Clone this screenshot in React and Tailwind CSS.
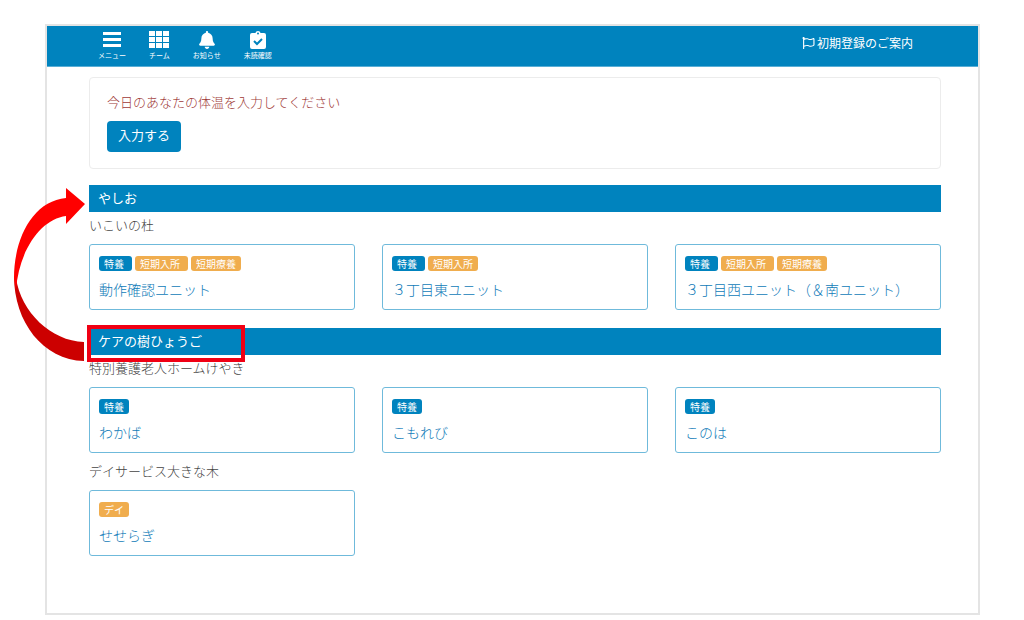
import clsx from 'clsx'
import { FaBell, FaRegFlag } from 'react-icons/fa'

const navItems = [
  { label: 'メニュー', icon: MenuIcon },
  { label: 'チーム', icon: GridIcon },
  { label: 'お知らせ', icon: FaBell },
  { label: '未読確認', icon: ClipboardIcon },
]

const corporations = [
  {
    name: 'やしお',
    facilities: [
      {
        name: 'いこいの杜',
        units: [
          { name: '動作確認ユニット', tags: ['特養', '短期入所', '短期療養'] },
          { name: '３丁目東ユニット', tags: ['特養', '短期入所'] },
          { name: '３丁目西ユニット（＆南ユニット）', tags: ['特養', '短期入所', '短期療養'] },
        ],
      },
    ],
  },
  {
    name: 'ケアの樹ひょうご',
    highlighted: true,
    facilities: [
      {
        name: '特別養護老人ホームけやき',
        units: [
          { name: 'わかば', tags: ['特養'] },
          { name: 'こもれび', tags: ['特養'] },
          { name: 'このは', tags: ['特養'] },
        ],
      },
      {
        name: 'デイサービス大きな木',
        units: [{ name: 'せせらぎ', tags: ['デイ'] }],
      },
    ],
  },
]

export default function App() {
  return (
    <div className="min-h-screen bg-white pt-6 pr-11 pb-1 pl-[45px] font-['Noto_Sans_CJK_JP',sans-serif] text-[13px] leading-5 text-[#444]">
      <div className="border-2 border-[#e4e4e4]">
        <Header />
        <main className="pt-[10px] pr-[37px] pb-[57px] pl-[42px]">
          <TemperaturePanel />
          <div className="relative mt-4 flex flex-col gap-[18px]">
            {corporations.map((corp) => (
              <Corporation key={corp.name} corporation={corp} />
            ))}
            <MoveArrow />
          </div>
        </main>
      </div>
    </div>
  )
}

function Header() {
  return (
    <header className="flex h-[41px] items-center justify-between border-b border-[#58aed6] bg-[#0083be] pr-[65px] pl-[51px] text-white">
      <nav className="mb-px flex gap-[23px]">
        {navItems.map(({ label, icon: Icon }) => (
          <button key={label} type="button" className="flex flex-col items-center gap-px">
            <Icon className="h-[18px] w-5" />
            <span className="text-[7px] leading-[10px]">{label}</span>
          </button>
        ))}
      </nav>
      <a href="#guide" className="mb-[6px] flex items-center gap-[2px] text-xs">
        <FaRegFlag className="h-3 w-[13px]" />
        初期登録のご案内
      </a>
    </header>
  )
}

function TemperaturePanel() {
  return (
    <section className="rounded-sm border border-[#ececec] px-[17px] pt-[14px] pb-4">
      <p className="font-light text-[#a03a38]">今日のあなたの体温を入力してください</p>
      <button type="button" className="mt-[9px] rounded bg-[#0083be] px-[11px] pt-1 pb-[7px] text-white">
        入力する
      </button>
    </section>
  )
}

function Corporation({ corporation }) {
  return (
    <section>
      <h2 className="relative bg-[#0083be] px-[9px] pt-[3px] pb-1 text-white">
        {corporation.name}
        {corporation.highlighted && (
          <span className="absolute -top-[3px] -left-[2px] h-[37px] w-[158px] border-4 border-[#f00014]" />
        )}
      </h2>
      <div className="flex flex-col gap-2 pt-[3px]">
        {corporation.facilities.map((facility) => (
          <div key={facility.name}>
            <h3 className="font-light">{facility.name}</h3>
            <div className="mt-[9px] grid grid-cols-3 gap-[27px]">
              {facility.units.map((unit) => (
                <UnitCard key={unit.name} unit={unit} />
              ))}
            </div>
          </div>
        ))}
      </div>
    </section>
  )
}

function UnitCard({ unit }) {
  return (
    <a href="#unit" className="block rounded-[3px] border border-[#6fbadb] px-[9px] pt-[11px] pb-[10px]">
      <div className="flex gap-[3px]">
        {unit.tags.map((tag) => (
          <span
            key={tag}
            className={clsx(
              'rounded-[3px] pr-2 pl-[5px] text-[10px] leading-[15px] text-white last:pr-[5px]',
              tag === '特養' ? 'bg-[#0083be]' : 'bg-[#f0ad4e]'
            )}
          >
            {tag}
          </span>
        ))}
      </div>
      <p className="mt-2 text-sm font-light text-[#0f7bb8]">{unit.name}</p>
    </a>
  )
}

// Curved arrow from the highlighted bar up to the first one
function MoveArrow() {
  return (
    <svg
      className="pointer-events-none absolute top-[3px] -left-[76px] h-[174px] w-[72px]"
      viewBox="0 0 72 174"
      aria-hidden="true"
    >
      <path d="M1 88C1 134 30 172 71 173V154C38 153 8 124 3 90Z" fill="#cc0000" />
      <path d="M53 0L72 16L53 36V28C28 31 6 62 3 102L1 90C1 50 20 13 53 10Z" fill="#ff0000" />
    </svg>
  )
}

function MenuIcon({ className }) {
  return (
    <svg viewBox="0 0 20 18" fill="currentColor" className={className} aria-hidden="true">
      <path d="M1 1h18v3H1zM1 7h18v3H1zM1 13h18v3H1z" />
    </svg>
  )
}

function GridIcon({ className }) {
  return (
    <svg viewBox="0 0 20 18" fill="currentColor" className={className} aria-hidden="true">
      <path d="M0 0h6v5H0zM7 0h6v5H7zM14 0h6v5h-6zM0 6h6v5H0zM7 6h6v5H7zM14 6h6v5h-6zM0 12h6v5H0zM7 12h6v5H7zM14 12h6v5h-6z" />
    </svg>
  )
}

function ClipboardIcon({ className }) {
  return (
    <svg viewBox="0 0 20 18" className={className} aria-hidden="true">
      <path
        d="M4 2h3.4a2.7 2.7 0 0 1 5.2 0H16a2 2 0 0 1 2 2v12a2 2 0 0 1-2 2H4a2 2 0 0 1-2-2V4a2 2 0 0 1 2-2z"
        fill="currentColor"
      />
      <circle cx="10" cy="2.5" r="1" fill="#0083be" />
      <path d="M6 10l3 3 5-5" fill="none" stroke="#0083be" strokeWidth="2" />
    </svg>
  )
}
